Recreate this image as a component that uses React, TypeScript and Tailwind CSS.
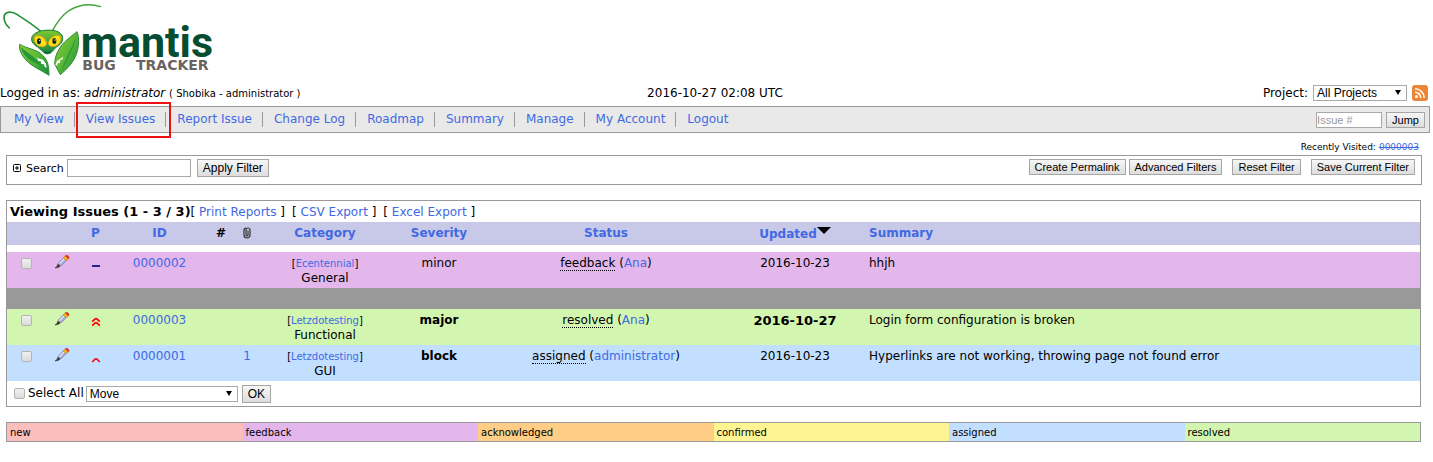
import { useState } from 'react'
import type { ReactNode } from 'react'

const menu = ['My View', 'View Issues', 'Report Issue', 'Change Log', 'Roadmap', 'Summary', 'Manage', 'My Account', 'Logout']

const legend = [
  { label: 'new', color: 'bg-[#fcbdbd]' },
  { label: 'feedback', color: 'bg-[#e3b7eb]' },
  { label: 'acknowledged', color: 'bg-[#ffcd85]' },
  { label: 'confirmed', color: 'bg-[#fff494]' },
  { label: 'assigned', color: 'bg-[#c2dfff]' },
  { label: 'resolved', color: 'bg-[#d2f5b0]' },
]

interface Issue {
  id: string
  priority: 'low' | 'high' | 'urgent'
  attachments: string
  project: string
  category: string
  severity: string
  severe: boolean
  status: string
  handler: string
  updated: string
  recent: boolean
  summary: string
  color: string
}

const stickyIssues: Issue[] = [
  { id: '0000002', priority: 'low', attachments: '', project: 'Ecentennial', category: 'General', severity: 'minor', severe: false, status: 'feedback', handler: 'Ana', updated: '2016-10-23', recent: false, summary: 'hhjh', color: 'bg-[#e3b7eb]' },
]

const issues: Issue[] = [
  { id: '0000003', priority: 'urgent', attachments: '', project: 'Letzdotesting', category: 'Functional', severity: 'major', severe: true, status: 'resolved', handler: 'Ana', updated: '2016-10-27', recent: true, summary: 'Login form configuration is broken', color: 'bg-[#d2f5b0]' },
  { id: '0000001', priority: 'high', attachments: '1', project: 'Letzdotesting', category: 'GUI', severity: 'block', severe: true, status: 'assigned', handler: 'administrator', updated: '2016-10-23', recent: false, summary: 'Hyperlinks are not working, throwing page not found error', color: 'bg-[#c2dfff]' },
]

const checkboxStyle = 'block size-[11px] appearance-none rounded-xs border border-[#b4b4b4] bg-linear-to-b from-[#f0f0f0] to-[#dcdcdc] checked:bg-[#4169e1]'

function Link({ children }: { children: ReactNode }) {
  return <a href="#" className="text-[#4169e1]">{children}</a>
}

function Button({ children, size }: { children: ReactNode; size: 'sm' | 'lg' }) {
  return (
    <button
      type="button"
      className={
        'shrink-0 whitespace-nowrap border border-[#a6a6a6] bg-linear-to-b from-[#f7f7f7] to-[#dddddd] font-[Liberation_Sans,Arial,sans-serif] ' +
        (size === 'sm' ? 'h-4 px-[5px] text-[11px] leading-[14px]' : 'h-[18px] px-[5px] text-[12px] leading-4')
      }
    >
      {children}
    </button>
  )
}

function Select({ id, label, options, className }: { id: string; label: string; options: string[]; className: string }) {
  return (
    <span className={'relative block ' + className}>
      <select
        id={id}
        aria-label={label}
        className="block h-4 w-full appearance-none border border-[#a9a9a9] bg-white pl-[3px] font-[Liberation_Sans,Arial,sans-serif] text-[12px] leading-[14px]"
      >
        {options.map((o) => (
          <option key={o}>{o}</option>
        ))}
      </select>
      <svg viewBox="0 0 6 5" className="pointer-events-none absolute top-[5px] right-[6px] h-[5px] w-[6px]">
        <path d="M0 0h6L3 5z" fill="#000" />
      </svg>
    </span>
  )
}

function Logo() {
  return (
    <svg viewBox="0 0 660 240" className="block h-20 w-[220px]" role="img" aria-label="Mantis Bug Tracker">
      <defs>
        <linearGradient id="claw" x1="0" y1="0" x2="1" y2="1">
          <stop offset="0" stopColor="#8fce32" />
          <stop offset="0.5" stopColor="#5cb836" />
          <stop offset="1" stopColor="#118a3c" />
        </linearGradient>
        <linearGradient id="head" x1="0" y1="0" x2="0" y2="1">
          <stop offset="0" stopColor="#7fc832" />
          <stop offset="1" stopColor="#128440" />
        </linearGradient>
      </defs>
      <path d="M129 101C112 82 80 63 52 44C32 31 12 36 12 52C12 66 19 76 28 84" fill="none" stroke="#27903d" strokeWidth="5" strokeLinecap="round" />
      <path d="M154 98C170 68 187 45 207 32C238 13 270 10 302 20" fill="none" stroke="#42a538" strokeWidth="4" strokeLinecap="round" />
      <path d="M59 133C80 146 112 148 128 166C143 180 147 198 147 226C124 210 95 200 78 180C64 165 56 147 59 133Z" fill="url(#claw)" stroke="#2a8f3a" strokeWidth="3" />
      <path d="M231 95C212 110 187 128 177 148C168 162 164 180 164 192L181 224C200 208 222 186 230 160C237 138 238 112 231 95Z" fill="url(#claw)" stroke="#2a8f3a" strokeWidth="3" />
      <path d="M62 140C86 164 118 176 145 220C136 208 124 196 104 188C82 178 68 162 62 140Z" fill="#25963c" />
      <path d="M229 108C222 142 206 168 183 218C192 186 207 160 217 138Z" fill="#25963c" />
      <path d="M104 172l9 4 1 7 8 0 2 9 8 1 2 8 6 2-2-12-9-12zM190 170l-3 9-7 0 1 9-8 2-2 7-5-2 5-12 9-6z" fill="#fff" />
      <path d="M98 107C110 87 172 84 184 103C194 116 185 134 169 141L157 154C151 164 133 164 128 154L113 141C97 133 90 118 98 107Z" fill="url(#head)" stroke="#1b8439" strokeWidth="3" />
      <path d="M105 109C119 103 136 112 140 129C140 140 127 143 116 138C105 132 100 120 105 109Z" fill="#fbe016" stroke="#d9a31a" strokeWidth="3" />
      <path d="M180 108C165 102 150 112 145 128C145 140 158 142 169 137C180 131 185 119 180 108Z" fill="#fbe016" stroke="#d9a31a" strokeWidth="3" />
      <ellipse cx="117" cy="124" rx="6" ry="9" fill="#17251a" />
      <ellipse cx="163" cy="123" rx="6" ry="9" fill="#17251a" />
      <circle cx="119" cy="121" r="2" fill="#fff" />
      <circle cx="165" cy="120" r="2" fill="#fff" />
      <path d="M134 156q8 6 17-1" fill="none" stroke="#074c2d" strokeWidth="3" />
      <text x="242" y="171" fill="#064d31" className="font-[Roboto,sans-serif] text-[129px] font-bold">mantis</text>
      <text x="247" y="210" fill="#6a6360" className="font-[DejaVu_Sans,sans-serif] text-[42px] font-bold">BUG</text>
      <text x="408" y="210" fill="#6a6360" className="font-[DejaVu_Sans,sans-serif] text-[42px] font-bold">TRACKER</text>
    </svg>
  )
}

function RssIcon() {
  return (
    <svg viewBox="0 0 16 16" className="block size-4">
      <rect x="0.5" y="0.5" width="15" height="15" rx="2" fill="#ee8332" stroke="#e08a4a" />
      <circle cx="4.5" cy="11.5" r="1.5" fill="#fff" />
      <path d="M3 7.2a5.8 5.8 0 0 1 5.8 5.8M3 3.8a9.2 9.2 0 0 1 9.2 9.2" fill="none" stroke="#fff" strokeWidth="1.6" />
    </svg>
  )
}

function PencilIcon() {
  return (
    <svg viewBox="0 0 16 16" className="block size-4">
      <path d="M4.2 9.2L9.5 3.6l3 2.8L7 12z" fill="#a9addb" stroke="#7a7aa0" strokeWidth="0.6" />
      <path d="M5.6 9.6L10.4 4.6" stroke="#e8eafa" strokeWidth="1.3" />
      <path d="M1 14q2.4-.8 2.8-3.8L6.2 12Q4.6 13.8 1 14z" fill="#3a3326" stroke="#3a3326" strokeWidth="0.6" />
      <path d="M9.2 3.8l2-2 3.2 3-2 2.2z" fill="#f2b022" stroke="#b97a1c" strokeWidth="0.5" />
      <path d="M11.4 1.8q1.4-1 2.8 .2t.2 2.9z" fill="#dc3a22" stroke="#c0301c" strokeWidth="0.6" />
    </svg>
  )
}

function ClipIcon() {
  return (
    <svg viewBox="0 0 8 12" className="block h-3 w-2">
      <path d="M1 2v6a3 3 0 0 0 6 0V3a2 2 0 0 0-4 0v5a1 1 0 0 0 2 0V3.5M1 3a2 2 0 0 1 2-2" fill="none" stroke="#333" strokeWidth="1.2" />
    </svg>
  )
}

function PriorityIcon({ priority }: { priority: Issue['priority'] }) {
  return (
    <svg viewBox="0 0 10 10" className="block size-[10px]" role="img" aria-label={priority}>
      {priority === 'low' && <path d="M1 6h8" stroke="#22229c" strokeWidth="2" />}
      {priority === 'high' && <path d="M1.2 9L4.2 6h1.6l3 3" fill="none" stroke="#f00" strokeWidth="1.7" />}
      {priority === 'urgent' && <path d="M1.2 4.6L4.2 1.8h1.6l3 2.8M1.2 8.6L4.2 5.8h1.6l3 2.8" fill="none" stroke="#f00" strokeWidth="1.7" />}
    </svg>
  )
}

function IssueRow({ issue, checked, onToggle }: { issue: Issue; checked: boolean; onToggle: () => void }) {
  return (
    <tr className={'h-9 text-center align-top ' + issue.color}>
      <td className="pt-[6px]">
        <input type="checkbox" aria-label={'Select ' + issue.id} checked={checked} onChange={onToggle} className={checkboxStyle + ' mx-auto'} />
      </td>
      <td className="pt-[2px]">
        <a href="#" aria-label={'Edit ' + issue.id} className="flex justify-center"><PencilIcon /></a>
      </td>
      <td className="pt-2"><div className="flex justify-center"><PriorityIcon priority={issue.priority} /></div></td>
      <td className="pt-1"><Link>{issue.id}</Link></td>
      <td></td>
      <td className="pt-1"><Link>{issue.attachments}</Link></td>
      <td className="pt-1">
        <div className="text-[10px]">[<Link>{issue.project}</Link>]</div>
        <div>{issue.category}</div>
      </td>
      <td className={'pt-1 ' + (issue.severe ? 'font-bold' : '')}>{issue.severity}</td>
      <td className="pt-1">
        <span className="border-b border-dotted border-black">{issue.status}</span> (<Link>{issue.handler}</Link>)
      </td>
      <td className={'pt-1 ' + (issue.recent ? 'text-[13px] font-bold' : '')}>{issue.updated}</td>
      <td className="pt-1 pl-1 text-left">{issue.summary}</td>
    </tr>
  )
}

export default function App() {
  const [selected, setSelected] = useState<string[]>([])
  const all = [...stickyIssues, ...issues]

  const toggle = (id: string) =>
    setSelected((s) => (s.includes(id) ? s.filter((x) => x !== id) : [...s, id]))
  const toggleAll = () => setSelected(selected.length === all.length ? [] : all.map((i) => i.id))

  const renderRow = (issue: Issue) => (
    <IssueRow key={issue.id} issue={issue} checked={selected.includes(issue.id)} onToggle={() => toggle(issue.id)} />
  )

  return (
    <div className="bg-white pr-[3px] font-[DejaVu_Sans,Verdana,sans-serif] text-[12px] leading-[15px] text-black">
      <Logo />

      <div className="grid h-[26px] grid-cols-3 items-center">
        <div>
          Logged in as: <i>administrator</i> <span className="text-[10px]">( Shobika - administrator )</span>
        </div>
        <div className="text-center">2016-10-27 02:08 UTC</div>
        <div className="flex items-center justify-end gap-[5px] pr-[2px]">
          <label htmlFor="project">Project:</label>
          <Select id="project" label="Project" options={['All Projects', 'Ecentennial', 'Letzdotesting']} className="w-[94px]" />
          <a href="#" aria-label="RSS"><RssIcon /></a>
        </div>
      </div>

      <nav className="flex h-[27px] items-center justify-between border border-[#999999] bg-[#e9e9e9] pr-1 pl-[2px]">
        <ul className="flex items-center">
          {menu.map((item) => (
            <li key={item} className="relative border-r border-[#999999] pr-[10px] pl-[11px] last:border-r-0">
              <Link>{item}</Link>
              {item === 'View Issues' && (
                <span className="pointer-events-none absolute -top-[10px] -right-[6px] -bottom-[11px] left-px border-2 border-[#ee1111]" />
              )}
            </li>
          ))}
        </ul>
        <form className="flex gap-1">
          <input
            aria-label="Issue #"
            placeholder="Issue #"
            className="h-4 w-[66px] border border-[#a9a9a9] bg-white font-[Liberation_Sans,Arial,sans-serif] text-[11px] placeholder:text-[#999999]"
          />
          <Button size="sm">Jump</Button>
        </form>
      </nav>

      <div className="flex h-[22px] items-center justify-end gap-[3px] pt-[7px] pr-[11px] text-[9px]">
        Recently Visited: <a href="#" className="text-[#4169e1] line-through">0000003</a>
      </div>

      <div className="mr-2 ml-[6px] flex h-[30px] items-start justify-between border border-[#999999] pt-[3px] pr-[6px] pl-[6px]">
        <div className="flex items-center">
          <button type="button" aria-label="Expand filters">
            <svg viewBox="0 0 8 8" className="block size-2">
              <rect x="0.5" y="0.5" width="7" height="7" rx="1" fill="#fff" stroke="#000" />
              <path d="M2 4h4M4 2v4" stroke="#000" />
            </svg>
          </button>
          <label htmlFor="search" className="ml-[5px] text-[11px]">Search</label>
          <input id="search" className="ml-[3px] h-[18px] w-[124px] border border-[#a9a9a9] bg-white px-1" />
          <span className="ml-[6px] flex"><Button size="lg">Apply Filter</Button></span>
        </div>
        <div className="flex">
          <Button size="sm">Create Permalink</Button>
          <span className="ml-[3px] flex"><Button size="sm">Advanced Filters</Button></span>
          <span className="ml-[10px] flex"><Button size="sm">Reset Filter</Button></span>
          <span className="ml-[10px] flex"><Button size="sm">Save Current Filter</Button></span>
        </div>
      </div>

      <div className="mt-[15px] mr-[9px] ml-[6px] border border-[#999999]">
        <div className="flex h-[21px] items-baseline gap-[7px] pt-[3px] pl-[3px]">
          <div>
            <span className="text-[13px] font-bold">Viewing Issues (1 - 3 / 3)</span>
            <span>[ <Link>Print Reports</Link> ]</span>
          </div>
          <span>[ <Link>CSV Export</Link> ]</span>
          <span>[ <Link>Excel Export</Link> ]</span>
        </div>
        <table className="w-full table-fixed">
          <colgroup>
            <col className="w-[38px]" />
            <col className="w-[34px]" />
            <col className="w-[33px]" />
            <col className="w-[95px]" />
            <col className="w-[28px]" />
            <col className="w-[24px]" />
            <col className="w-[132px]" />
            <col className="w-[96px]" />
            <col className="w-[238px]" />
            <col className="w-[140px]" />
            <col />
          </colgroup>
          <thead>
            <tr className="h-[23px] bg-[#c8c8e8]">
              <td></td>
              <td></td>
              <th><Link>P</Link></th>
              <th><Link>ID</Link></th>
              <th>#</th>
              <th aria-label="Attachments"><div className="flex justify-center pb-[2px]"><ClipIcon /></div></th>
              <th><Link>Category</Link></th>
              <th><Link>Severity</Link></th>
              <th><Link>Status</Link></th>
              <th>
                <div className="flex items-start justify-center pt-[2px]">
                  <Link>Updated</Link>
                  <svg viewBox="0 0 14 7" className="h-[7px] w-[14px]"><path d="M0 0h14L7 7z" fill="#000" /></svg>
                </div>
              </th>
              <th className="pl-1 text-left"><Link>Summary</Link></th>
            </tr>
          </thead>
          <tbody>
            <tr className="h-[7px]"><td colSpan={11}></td></tr>
            {stickyIssues.map(renderRow)}
            <tr className="h-[21px] bg-[#999999]"><td colSpan={11}></td></tr>
            {issues.map(renderRow)}
          </tbody>
        </table>
        <div className="flex h-[25px] items-center pl-[7px]">
          <input
            id="select-all"
            type="checkbox"
            checked={selected.length === all.length}
            onChange={toggleAll}
            className={checkboxStyle}
          />
          <label htmlFor="select-all" className="mr-[2px] ml-[3px]">Select All</label>
          <Select id="action" label="Action" options={['Move', 'Copy', 'Assign', 'Close', 'Delete']} className="w-[152px]" />
          <span className="ml-1 flex"><Button size="lg">OK</Button></span>
        </div>
      </div>

      <ul className="mt-[15px] mr-[9px] ml-[6px] grid grid-cols-6 border border-[#999999] text-[10px]">
        {legend.map((l) => (
          <li key={l.label} className={'h-[18px] pl-[3px] leading-5 ' + l.color}>{l.label}</li>
        ))}
      </ul>
    </div>
  )
}
